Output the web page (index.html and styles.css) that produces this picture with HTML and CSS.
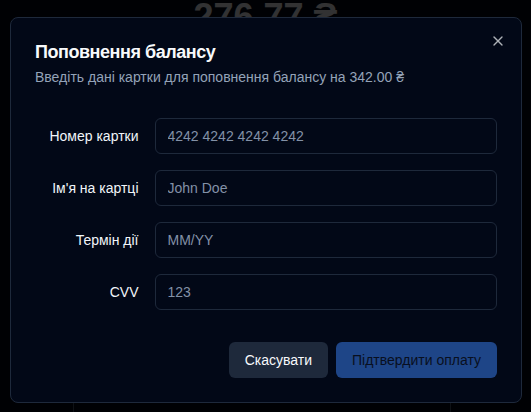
FILE: index.html
```html
<!DOCTYPE html>
<html lang="uk">
<head>
<meta charset="utf-8">
<title>Поповнення балансу</title>
<link rel="stylesheet" href="styles.css">
</head>
<body>
<main class="page">
  <h1 class="balance">276.77 ₴</h1>
  <section class="card"></section>
</main>
<div class="overlay"></div>
<div class="dialog" role="dialog">
  <header class="dialog-header">
    <h2 class="dialog-title">Поповнення балансу</h2>
    <p class="dialog-desc">Введіть дані картки для поповнення балансу на 342.00 ₴</p>
  </header>
  <form class="form">
    <div class="row">
      <label class="label" for="num">Номер картки</label>
      <input class="input" id="num" placeholder="4242 4242 4242 4242">
    </div>
    <div class="row">
      <label class="label" for="name">Ім'я на картці</label>
      <input class="input" id="name" placeholder="John Doe">
    </div>
    <div class="row">
      <label class="label" for="exp">Термін дії</label>
      <input class="input" id="exp" placeholder="MM/YY">
    </div>
    <div class="row">
      <label class="label" for="cvv">CVV</label>
      <input class="input" id="cvv" placeholder="123">
    </div>
  </form>
  <footer class="dialog-footer">
    <button class="btn btn-secondary" type="button">Скасувати</button>
    <button class="btn btn-primary" type="button" disabled>Підтвердити оплату</button>
  </footer>
  <button class="close" type="button" aria-label="Close">
    <svg width="16" height="16" viewBox="0 0 24 24" fill="none" stroke="currentColor" stroke-width="2" stroke-linecap="round" stroke-linejoin="round"><path d="M18 6 6 18"/><path d="m6 6 12 12"/></svg>
  </button>
</div>
</body>
</html>
```

FILE: styles.css
```css
* { box-sizing: border-box; }
html, body { margin: 0; padding: 0; }
body {
  background: #020817;
  color: #f8fafc;
  font-family: "Liberation Sans", Arial, sans-serif;
  height: 412px;
  overflow: hidden;
}
.page {
  height: 412px;
  display: flex;
  flex-direction: column;
  align-items: center;
}
.balance {
  margin: -3px 0 0;
  font-size: 36px;
  line-height: 40px;
  font-weight: 700;
  color: #f8fafc;
}
.card {
  margin: 40px 8px 0 0;
  width: 378px;
  flex: 1;
  border: 1px solid #475569;
  border-bottom: 0;
  border-radius: 8px 8px 0 0;
}
.overlay {
  position: fixed;
  inset: 0;
  background: rgba(0, 0, 0, 0.8);
}
.dialog {
  position: fixed;
  left: 10px;
  top: 17px;
  width: 512px;
  display: grid;
  gap: 16px;
  padding: 24px;
  background: #020817;
  border: 1px solid #1e293b;
  border-radius: 8px;
}
.dialog-header {
  display: flex;
  flex-direction: column;
  gap: 6px;
  padding-top: 1px;
}
.dialog-title {
  margin: 0;
  font-size: 18px;
  line-height: 18px;
  font-weight: 700;
  letter-spacing: -0.45px;
  color: #f8fafc;
}
.dialog-desc {
  margin: 0;
  font-size: 14px;
  line-height: 20px;
  color: #94a3b8;
}
.form {
  display: grid;
  gap: 16px;
  padding: 15px 0 16px;
}
.row {
  display: grid;
  grid-template-columns: repeat(4, 1fr);
  gap: 16px;
  align-items: center;
}
.label {
  text-align: right;
  font-size: 14px;
  line-height: 14px;
  color: #f1f5f9;
}
.input {
  grid-column: span 3;
  height: 36px;
  padding: 0 12px;
  background: transparent;
  border: 1px solid #1e293b;
  border-radius: 6px;
  font-family: inherit;
  font-size: 14px;
  color: #f8fafc;
  outline: none;
}
.input::placeholder { color: #8391a7; opacity: 1; }
.dialog-footer {
  display: flex;
  justify-content: flex-end;
  gap: 8px;
}
.btn {
  height: 36px;
  padding: 0 16px;
  border: 0;
  border-radius: 6px;
  font-family: inherit;
  font-size: 14px;
  font-weight: 500;
}
.btn-secondary { background: #1e293b; color: #f8fafc; }
.btn-primary { background: #3b82f6; color: #0f172a; opacity: 0.5; }
.close {
  position: absolute;
  top: 15px;
  right: 15px;
  width: 16px;
  height: 16px;
  padding: 0;
  border: 0;
  background: none;
  color: #f8fafc;
  opacity: 0.7;
  display: flex;
}
```
